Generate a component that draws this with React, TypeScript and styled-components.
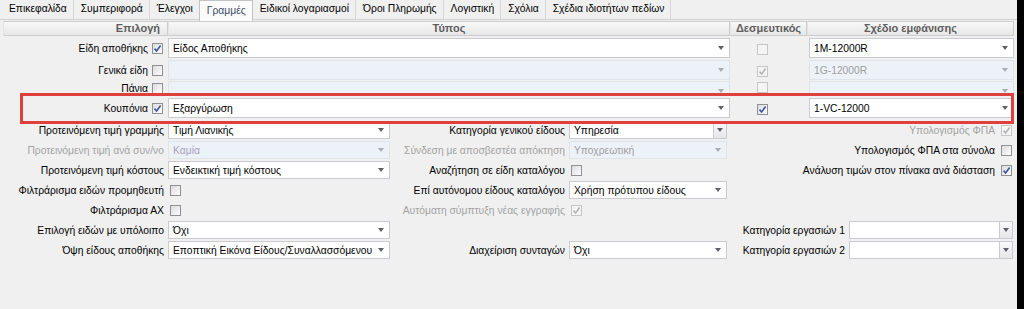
import { createGlobalStyle, css, styled } from "styled-components";

const tabs = [
  "Επικεφαλίδα",
  "Συμπεριφορά",
  "Έλεγχοι",
  "Γραμμές",
  "Ειδικοί λογαριασμοί",
  "Όροι Πληρωμής",
  "Λογιστική",
  "Σχόλια",
  "Σχέδια ιδιοτήτων πεδίων",
];

interface IGridRow {
  label: string;
  on: boolean;
  type: string;
  typeOff: boolean;
  bind: boolean;
  bindOff: boolean;
  design: string;
  designOff: boolean;
  height: number;
  clip?: boolean;
}

const gridRows: IGridRow[] = [
  { label: "Είδη αποθήκης", on: true, type: "Είδος Αποθήκης", typeOff: false, bind: false, bindOff: true, design: "1M-12000R", designOff: false, height: 24 },
  { label: "Γενικά είδη", on: false, type: "", typeOff: true, bind: true, bindOff: true, design: "1G-12000R", designOff: true, height: 20 },
  { label: "Πάνια", on: false, type: "", typeOff: true, bind: false, bindOff: true, design: "", designOff: true, height: 16, clip: true },
  { label: "Κουπόνια", on: true, type: "Εξαργύρωση", typeOff: false, bind: true, bindOff: false, design: "1-VC-12000", designOff: false, height: 24 },
];

export default function App() {
  return (
    <>
      <GlobalStyle />
      <Window>
        <Main>
          <TabStrip>
            {tabs.map((t) => (
              <Tab key={t} $active={t === "Γραμμές"}>
                {t}
              </Tab>
            ))}
          </TabStrip>

          <ColumnHeader>
            <HeaderCell $align="right">Επιλογή</HeaderCell>
            <HeaderCell>Τύπος</HeaderCell>
            <HeaderCell>Δεσμευτικός</HeaderCell>
            <HeaderCell>Σχέδιο εμφάνισης</HeaderCell>
          </ColumnHeader>

          {gridRows.map((r) => (
            <GridRow key={r.label} $h={r.height} $clip={r.clip}>
              <ChoiceCell>
                <span>{r.label}</span>
                <Check checked={r.on} />
              </ChoiceCell>
              <Combo text={r.type} disabled={r.typeOff} />
              <BindCell>
                <Check checked={r.bind} disabled={r.bindOff} />
              </BindCell>
              <DesignCell>
                <Combo text={r.design} disabled={r.designOff} />
              </DesignCell>
            </GridRow>
          ))}

          <FormGrid>
            {/* row 1 */}
            <FieldLabel>Προτεινόμενη τιμή γραμμής</FieldLabel>
            <Combo text="Τιμή Λιανικής" />
            <FieldLabel>Κατηγορία γενικού είδους</FieldLabel>
            <Combo text="Υπηρεσία" boxed />
            <CheckField $off>
              Υπολογισμός ΦΠΑ <Check checked disabled />
            </CheckField>

            {/* row 2 */}
            <FieldLabel $off>Προτεινόμενη τιμή ανά συν/νο</FieldLabel>
            <Combo text="Καμία" disabled muted="#a89fbf" />
            <FieldLabel $off>Σύνδεση με αποσβεστέα απόκτηση</FieldLabel>
            <Combo text="Υποχρεωτική" disabled />
            <CheckField>
              Υπολογισμός ΦΠΑ στα σύνολα <Check checked={false} />
            </CheckField>

            {/* row 3 */}
            <FieldLabel>Προτεινόμενη τιμή κόστους</FieldLabel>
            <Combo text="Ενδεικτική τιμή κόστους" />
            <FieldLabel>Αναζήτηση σε είδη καταλόγου</FieldLabel>
            <CheckSlot>
              <Check checked={false} />
            </CheckSlot>
            <CheckField>
              Ανάλυση τιμών στον πίνακα ανά διάσταση <Check checked />
            </CheckField>

            {/* row 4 */}
            <FieldLabel>Φιλτράρισμα ειδών προμηθευτή</FieldLabel>
            <CheckSlot>
              <Check checked={false} />
            </CheckSlot>
            <FieldLabel>Επί αυτόνομου είδους καταλόγου</FieldLabel>
            <Combo text="Χρήση πρότυπου είδους" />
            <Spacer />

            {/* row 5 */}
            <FieldLabel>Φιλτράρισμα ΑΧ</FieldLabel>
            <CheckSlot>
              <Check checked={false} />
            </CheckSlot>
            <FieldLabel $off>Αυτόματη σύμπτυξη νέας εγγραφής</FieldLabel>
            <CheckSlot>
              <Check checked disabled />
            </CheckSlot>
            <Spacer />

            {/* row 6 */}
            <FieldLabel>Επιλογή ειδών με υπόλοιπο</FieldLabel>
            <Combo text="Όχι" />
            <Gap />
            <FieldLabel>Κατηγορία εργασιών 1</FieldLabel>
            <Combo text="" boxed />

            {/* row 7 */}
            <FieldLabel>Όψη είδους αποθήκης</FieldLabel>
            <Combo text="Εποπτική Εικόνα Είδους/Συναλλασσόμενου" />
            <FieldLabel>Διαχείριση συνταγών</FieldLabel>
            <Combo text="Όχι" />
            <FieldLabel>Κατηγορία εργασιών 2</FieldLabel>
            <Combo text="" boxed />
          </FormGrid>

          <Highlight />
        </Main>
        <Edge />
      </Window>
    </>
  );
}

function Check({ checked, disabled }: ICheck) {
  return (
    <CheckBox $off={disabled}>
      {checked && (
        <svg width="9" height="9" viewBox="0 0 9 9">
          <path
            d="M1.5 4.6 L3.6 7 L7.6 1.6"
            fill="none"
            stroke={disabled ? "#b4b4b4" : "#3d55a3"}
            strokeWidth="1.6"
          />
        </svg>
      )}
    </CheckBox>
  );
}

function Combo({ text, disabled, boxed, muted }: ICombo) {
  return (
    <ComboBox $off={disabled} $muted={muted}>
      <span>{text}</span>
      {boxed ? (
        <ArrowButton>
          <Arrow />
        </ArrowButton>
      ) : (
        <Arrow $off={disabled} />
      )}
    </ComboBox>
  );
}

// TYPE INTERFACES

interface ICheck {
  checked: boolean;
  disabled?: boolean;
}

interface ICombo {
  text: string;
  disabled?: boolean;
  boxed?: boolean;
  muted?: string;
}

// STYLED COMPONENTS

const GlobalStyle = createGlobalStyle`
  html, body {
    margin: 0;
    padding: 0;
    background: #f0f0f0;
  }
  body {
    font-family: "Liberation Sans", Arial, sans-serif;
    font-size: 10.3px;
    color: #000;
  }
`;

const Window = styled.div`
  display: flex;
  width: 1024px;
  height: 309px;
  overflow: hidden;
  background: #f0f0f0;
`;

const Main = styled.div`
  position: relative;
  flex: 1;
`;

const Edge = styled.div`
  width: 7px;
  background: #000;
`;

const TabStrip = styled.div`
  display: flex;
  height: 20px;
  padding-left: 2px;
  border-bottom: 1px solid #d0d0d0;
  box-sizing: border-box;
`;

const Tab = styled.div<{ $active?: boolean }>`
  padding: 0 6px 0 7px;
  line-height: 18px;
  height: 19px;
  border-right: 1px solid #d6d6d6;
  white-space: nowrap;

  ${(p) =>
    p.$active &&
    css`
      margin-left: -1px;
      height: 20px;
      line-height: 20px;
      background: #fbfbfb;
      border: 1px solid #c3c3c3;
      border-bottom: none;
      color: #3c4d6b;
    `}
`;

const columns = "165px 562px 77px 207px";

const ColumnHeader = styled.div`
  display: grid;
  grid-template-columns: ${columns};
  height: 15px;
  margin: 1px 0 0 3px;
`;

const HeaderCell = styled.div<{ $align?: string }>`
  border: 1px solid #cdcdcd;
  border-left-color: #e4e4e4;
  background: linear-gradient(#f8f8f8, #e7e7e7);
  color: #5e5e5e;
  font-size: 11px;
  font-weight: bold;
  line-height: 13px;
  text-align: ${(p) => p.$align ?? "center"};
  padding-right: ${(p) => (p.$align === "right" ? "7px" : "0")};
  white-space: nowrap;
`;

const GridRow = styled.div<{ $h: number; $clip?: boolean }>`
  display: grid;
  grid-template-columns: ${columns};
  margin-left: 3px;
  height: ${(p) => p.$h}px;
  align-items: ${(p) => (p.$clip ? "start" : "center")};
  overflow: hidden;

  & > * {
    margin-top: ${(p) => (p.$clip ? "1px" : "0")};
  }
`;

const ChoiceCell = styled.div`
  display: flex;
  justify-content: flex-end;
  align-items: center;
  gap: 4px;
  height: 15px;
  padding-right: 5px;
  white-space: nowrap;
`;

const BindCell = styled.div`
  display: flex;
  justify-content: center;
  padding-right: 12px;
  margin-top: 2px;
`;

const DesignCell = styled.div`
  padding-left: 2px;
`;

const CheckBox = styled.span<{ $off?: boolean }>`
  display: inline-flex;
  align-items: center;
  justify-content: center;
  flex: none;
  width: 11px;
  height: 11px;
  box-sizing: border-box;
  border: 1px solid ${(p) => (p.$off ? "#c6c6c6" : "#8f9094")};
  background: ${(p) =>
    p.$off ? "#f4f4f4" : "linear-gradient(135deg, #dcdcdc, #fdfdfd)"};
`;

const ComboBox = styled.div<{ $off?: boolean; $muted?: string }>`
  position: relative;
  display: flex;
  align-items: center;
  height: 20px;
  box-sizing: border-box;
  padding: 0 14px 0 4px;
  border: 1px solid ${(p) => (p.$off ? "#dfe3ea" : "#c9cbd0")};
  background: ${(p) => (p.$off ? "#edf2f9" : "#fff")};
  color: ${(p) => (p.$off ? p.$muted ?? "#9d9d9d" : "#000")};
  white-space: nowrap;
  overflow: hidden;

  & > span {
    flex: 1;
  }
`;

const Arrow = styled.i<{ $off?: boolean }>`
  width: 0;
  height: 0;
  border-left: 3.5px solid transparent;
  border-right: 3.5px solid transparent;
  border-top: 4px solid ${(p) => (p.$off ? "#a9adb3" : "#5f6166")};
  margin-right: -9px;
`;

const ArrowButton = styled.div`
  display: flex;
  align-items: center;
  justify-content: center;
  align-self: stretch;
  width: 12px;
  margin-right: -14px;
  border-left: 1px solid #c9cbd0;
  background: linear-gradient(#fafafa, #e6e6e6);

  & > i {
    margin: 0;
  }
`;

const FormGrid = styled.div`
  display: grid;
  grid-template-columns: 164px 222px 171px 158px 114px 164px;
  column-gap: 4px;
  grid-auto-rows: 20px;
  align-items: center;

  & > ${ComboBox} {
    height: 18px;
  }
`;

const FieldLabel = styled.div<{ $off?: boolean }>`
  display: flex;
  justify-content: flex-end;
  white-space: nowrap;
  color: ${(p) => (p.$off ? "#a3a3a3" : "#000")};
`;

const CheckField = styled(FieldLabel)`
  grid-column: 5 / 7;
  align-items: center;
  gap: 6px;
  padding-right: 1px;
`;

const CheckSlot = styled.div`
  display: flex;
  padding-left: 2px;
`;

const Spacer = styled.div`
  grid-column: 5 / 7;
`;

const Gap = styled.div`
  grid-column: 3 / 5;
`;

const Highlight = styled.div`
  position: absolute;
  left: 20px;
  top: 93px;
  width: 994px;
  height: 31px;
  box-sizing: border-box;
  border: 3px solid #e0403c;
  pointer-events: none;
`;
